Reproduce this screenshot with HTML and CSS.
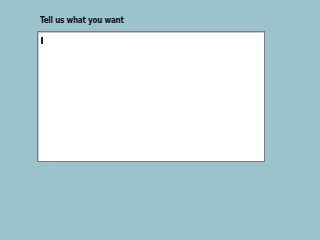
FILE: index.html
```html
<!DOCTYPE html>
<html>
<head>
<meta charset="utf-8">
<link rel="stylesheet" href="styles.css">
</head>
<body>
<div class="form">
  <label class="label">Tell us what you want</label>
  <div class="box"><span class="caret"></span></div>
</div>
</body>
</html>
```
FILE: styles.css
```css
html, body {
  margin: 0;
  padding: 0;
  background: #9ac3cc;
  width: 300px;
  height: 225px;
  overflow: hidden;
}
.form {
  display: flex;
  flex-direction: column;
  align-items: flex-start;
  padding: 16px 0 0 37px;
}
.label {
  font-family: "DejaVu Sans Condensed", "DejaVu Sans", sans-serif;
  font-stretch: condensed;
  font-weight: 700;
  font-size: 8px;
  line-height: 10px;
  letter-spacing: -0.2px;
  color: #111;
  margin: 0 0 5px 3px;
}
.box {
  box-sizing: border-box;
  width: 228px;
  height: 131px;
  background: #fff;
  border: 1px solid #7d7d7d;
  box-shadow: inset 1px 1px 0 #c8c8c8;
  padding: 5px 0 0 3px;
}
.caret {
  display: block;
  width: 2px;
  height: 7px;
  background: #222;
}
```
